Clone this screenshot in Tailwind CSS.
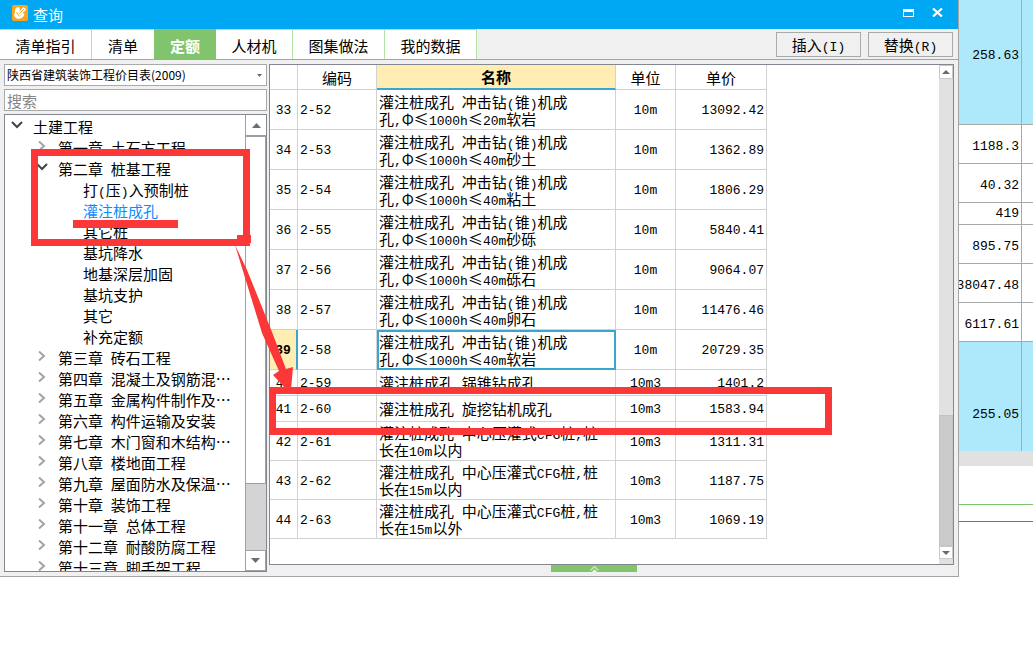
<!DOCTYPE html>
<html lang="zh-CN">
<head>
<meta charset="utf-8">
<meta name="viewport" content="width=device-width, initial-scale=1">
<title>查询</title>
<script src="https://cdn.jsdelivr.net/npm/@tailwindcss/browser@4"></script>
</head>
<body class="relative min-h-screen bg-white overflow-x-hidden font-['Noto_Sans_CJK_SC',sans-serif] text-[15px] leading-[17px] text-black">
<div class="flex items-start">

  <section class="relative flex-1 min-w-0 bg-[#f0f0f0] border-r border-b border-[#a5a5a5]" aria-label="查询">
    <header class="flex items-center h-[29px] bg-[#00a8f3] text-white pl-3 pr-3.5">
      <svg class="w-4 h-4 mb-1" viewBox="0 0 16 16" aria-hidden="true">
        <rect width="16" height="16" rx="2" fill="#fba61c"/>
        <path d="M7.500 2.500C4 1.500 2.500 4 3 6.500c.3 1.500-.8 2-.8 3.500 0 3 3 4.500 6 3.500 2.500-.8 3.500-2 4.300-4.500L10.500 8 8 11z" fill="#fff"/>
        <path d="M5.500 8.500l6-6.500 2.800 2.500L7.500 11z" fill="#fff"/>
        <path d="M4.500 7l3 4.500M7.500 8.500l4.500-4.500" fill="none" stroke="#fba61c"/>
      </svg>
      <h1 class="ml-[5px]">查询</h1>
      <button class="ml-auto mr-[18px] mb-1" aria-label="最大化"><svg class="w-[11px] h-2" viewBox="0 0 11 8"><path d="M0 0h11v8H0zM1 3v4h9V3z" fill="#fff" fill-rule="evenodd"/></svg></button>
      <button class="mr-[1px] mb-1" aria-label="关闭"><svg class="w-[11px] h-[9px]" viewBox="0 0 11 9"><path d="M1 .5l9 8M10 .5l-9 8" stroke="#fff" stroke-width="2.200"/></svg></button>
    </header>

    <nav class="flex h-[31px] border-b border-[#7fc36a]">
      <button class="w-[92px] bg-white border-t border-r border-[#b4e4a4] pt-[2px]">清单指引</button>
      <button class="w-[62px] bg-white border-t border-[#b4e4a4] pt-[2px]">清单</button>
      <button class="w-[62px] bg-[#81c46c] text-white font-bold pt-[2px]">定额</button>
      <button class="w-[77px] bg-white border-t border-r border-[#b4e4a4] pt-[2px]">人材机</button>
      <button class="w-[92px] bg-white border-t border-r border-[#b4e4a4] pt-[2px]">图集做法</button>
      <button class="w-[92px] bg-white border-t border-r border-[#b4e4a4] pt-[2px]">我的数据</button>
      <div class="flex gap-[7px] ml-auto mr-[5px] pt-[3px]">
        <button class="w-[85px] h-[25px] border border-[#a9a9a9]">插入<span class="font-['Liberation_Mono',monospace] text-[13px] leading-[0px]">(I)</span></button>
        <button class="w-[85px] h-[25px] border border-[#a9a9a9]">替换<span class="font-['Liberation_Mono',monospace] text-[13px] leading-[0px]">(R)</span></button>
      </div>
    </nav>

    <div class="flex items-start gap-[2px] pl-1 pr-1 pt-1 pb-1">
      <div class="w-[263px] shrink-0 flex flex-col gap-[3px]">
        <div class="relative">
          <select aria-label="价目表" class="block w-full h-[22px] appearance-none bg-white border border-[#a9a9a9] pl-[2px] text-xs leading-[18px]"><option>陕西省建筑装饰工程价目表(2009)</option></select>
          <svg class="absolute right-[5px] top-[10px] w-[5px] h-[3px] pointer-events-none" viewBox="0 0 5 3"><path d="M0 0h5L2.500 3z" fill="#6b6b80"/></svg>
        </div>
        <input type="text" aria-label="搜索" placeholder="搜索" class="h-[22px] w-full bg-white border border-[#a9a9a9] pl-[2px] placeholder:text-[#858585]">
        <div class="flex h-[458px] bg-white border border-[#83878f]">
          <ul id="tree" class="flex-1 min-w-0 overflow-hidden pt-[1px]"></ul>
          <div class="w-[21px] flex flex-col bg-[#d4d4d4] border-l border-[#a0a0a0]">
            <button class="h-[21px] bg-white border-b border-[#a0a0a0] flex items-center justify-center" aria-label="向上"><svg class="w-[9px] h-[5px]" viewBox="0 0 9 5"><path d="M0 5h9L4.500 0z" fill="#6b6b80"/></svg></button>
            <div class="h-[348px] bg-white border-y border-r border-[#a0a0a0]"></div>
            <button class="mt-auto h-[21px] bg-white border border-l-0 border-[#a0a0a0] flex items-center justify-center" aria-label="向下"><svg class="w-[9px] h-[5px]" viewBox="0 0 9 5"><path d="M0 0h9L4.500 5z" fill="#6b6b80"/></svg></button>
          </div>
        </div>
      </div>

      <div class="flex-1 min-w-0">
        <div class="flex justify-between h-[501px] bg-white border border-[#83878f]">
          <table class="w-[497px] h-fit table-fixed border-separate border-spacing-0">
            <colgroup><col class="w-[28px]"><col class="w-[79px]"><col class="w-[239px]"><col class="w-[60px]"><col class="w-[91px]"></colgroup>
            <thead>
              <tr class="h-[25px]">
                <th class="border-r border-b border-[#d2d2d2]"></th>
                <th class="border-r border-b border-[#d2d2d2] font-normal">编码</th>
                <th class="border-r border-r-[#d2d2d2] border-b-2 border-b-[#3aa6d0] bg-[#ffedb4] font-bold">名称</th>
                <th class="border-r border-b border-[#d2d2d2] font-normal">单位</th>
                <th class="border-r border-b border-[#d2d2d2] font-normal">单价</th>
              </tr>
            </thead>
            <tbody id="rows"></tbody>
          </table>
          <div class="w-[14px] flex flex-col bg-[#e1e1e1] pb-[5px]">
            <button class="h-[14px] bg-white border border-[#cacaca] flex items-center justify-center" aria-label="向上"><svg class="w-2 h-1" viewBox="0 0 8 4"><path d="M0 4h8L4 0z" fill="#6b6b75"/></svg></button>
            <div class="mt-auto h-[131px] bg-[#cbcbcb] border border-[#c2c2c2]"></div>
            <button class="h-[13px] bg-white border border-[#cacaca] flex items-center justify-center" aria-label="向下"><svg class="w-2 h-1" viewBox="0 0 8 4"><path d="M0 0h8L4 4z" fill="#6b6b75"/></svg></button>
          </div>
        </div>
        <button class="flex items-end justify-center w-[86px] h-[7px] ml-[282px] bg-[#81c46c]" aria-label="展开"><svg class="w-[9px] h-[6px]" viewBox="0 0 9 6"><path d="M.5 4.500l4-4 4 4" fill="none" stroke="#c9e8bf" stroke-width="1.400"/><path d="M2 6l2.500-2.500L7 6z" fill="#fff"/></svg></button>
      </div>
    </div>
  </section>

  <aside class="w-[74px] shrink-0 overflow-hidden font-['Liberation_Mono',monospace] text-[13px]">
    <div id="sheet"></div>
    <div class="h-[15px] bg-[#e1e1e1]"></div>
    <div class="h-[39px] border-b border-[#81c46c]"></div>
    <div class="h-[17px] border-b border-[#77737a]"></div>
  </aside>
</div>

<!-- red callouts drawn over the window -->
<div class="absolute left-[31px] top-[149px] w-[219px] h-[97px] border-[7px] border-[#fb3737] pointer-events-none"></div>
<div class="absolute left-[73px] top-[220px] w-[105px] h-2 bg-[#fb3737]"></div>
<div class="absolute left-[237px] top-[235px] w-[14px] h-2 bg-[#fb3737]"></div>
<div class="absolute left-[269px] top-[387px] w-[563px] h-12 border-[7px] border-[#fb3737] pointer-events-none"></div>
<svg class="absolute left-[225px] top-[230px] w-[85px] h-[170px] pointer-events-none" viewBox="0 0 85 170"><path d="M10 15L22 40L47 102L61 139L68 137L66 160L60 158L48 145L54 141L37 103Z" fill="#fb3737"/></svg>

<script>
const latin = s => s.replace(/[ -~]+/g, m => `<span class="font-['Liberation_Mono',monospace] text-[13px] leading-[0px] whitespace-pre-wrap">${m}</span>`);

// [depth, label, state]
const tree = [
  [0,'土建工程','open'],[1,'第一章 土石方工程',''],[1,'第二章 桩基工程','open'],
  [2,'打(压)入预制桩'],[2,'灌注桩成孔','active'],[2,'其它桩'],[2,'基坑降水'],[2,'地基深层加固'],[2,'基坑支护'],[2,'其它'],[2,'补充定额'],
  [1,'第三章 砖石工程',''],[1,'第四章 混凝土及钢筋混⋯',''],[1,'第五章 金属构件制作及⋯',''],[1,'第六章 构件运输及安装',''],
  [1,'第七章 木门窗和木结构⋯',''],[1,'第八章 楼地面工程',''],[1,'第九章 屋面防水及保温⋯',''],[1,'第十章 装饰工程',''],
  [1,'第十一章 总体工程',''],[1,'第十二章 耐酸防腐工程',''],[1,'第十三章 脚手架工程','']
];
const pads = ['pl-[6px]','pl-[31px]','pl-[78px]'];
const openIcon = '<svg class="w-3 h-2 mr-[10px] mb-1 shrink-0" viewBox="0 0 12 8"><path d="M1 1l5 5 5-5" fill="none" stroke="#444" stroke-width="2"/></svg>';
const shutIcon = '<svg class="w-3 h-[10px] mr-[10px] mb-[3px] shrink-0" viewBox="0 0 12 10"><path d="M3 .5L8 5 3 9.500" fill="none" stroke="#a3a3a3" stroke-width="2"/></svg>';
document.getElementById('tree').innerHTML = tree.map(([d, t, s]) =>
  `<li class="flex items-center h-[21px] whitespace-nowrap ${pads[d]} ${s === 'active' ? 'text-[#0a8cff]' : ''}">${d === 2 ? '' : s === 'open' ? openIcon : shutIcon}<span>${latin(t)}</span></li>`).join('');

const drill = '灌注桩成孔 冲击钻(锥)机成<br>孔,Φ≤1000h≤';
const cfg = '灌注桩成孔 中心压灌式CFG桩,桩<br>长在';
const rows = [
  [33,'2-52',[drill,'20m软岩'],'10m','13092.42'],[34,'2-53',[drill,'40m砂土'],'10m','1362.89'],
  [35,'2-54',[drill,'40m粘土'],'10m','1806.29'],[36,'2-55',[drill,'40m砂砾'],'10m','5840.41'],
  [37,'2-56',[drill,'40m砾石'],'10m','9064.07'],[38,'2-57',[drill,'40m卵石'],'10m','11476.46'],
  [39,'2-58',[drill,'40m软岩'],'10m','20729.35'],[40,'2-59',['灌注桩成孔 锅锥钻成孔'],'10m3','1401.2'],
  [41,'2-60',['灌注桩成孔 旋挖钻机成孔'],'10m3','1583.94'],[42,'2-61',[cfg,'10m以内'],'10m3','1311.31'],
  [43,'2-62',[cfg,'15m以内'],'10m3','1187.75'],[44,'2-63',[cfg,'15m以外'],'10m3','1069.19']
];
document.getElementById('rows').innerHTML = rows.map(([n, code, name, unit, price]) => {
  const h = n < 40 ? 'h-[40px]' : n < 42 ? 'h-[26px]' : 'h-[39px]';
  const cell = "border-r border-b border-[#d2d2d2] pt-[2px] font-['Liberation_Mono',monospace] text-[13px]";
  const sel = n === 39;
  const text = name.join('').split('<br>').map(latin).join('<br>');
  return `<tr class="${h}">
    <td class="border-b border-b-[#d2d2d2] pt-[2px] font-['Liberation_Mono',monospace] text-[13px] text-center ${sel ? 'border-r-2 border-r-[#3aa6d0] bg-[#ffedb4] font-bold' : 'border-r border-r-[#d2d2d2]'}">${n}</td>
    <td class="${cell} pl-[2px]">${code}</td>
    <td class="whitespace-nowrap ${sel ? 'border-2 border-[#3aa6d0]' : 'border-r border-b border-[#d2d2d2] pl-[2px]'}">${text}</td>
    <td class="${cell} text-center">${unit}</td>
    <td class="${cell} text-right pr-[2px]">${price}</td></tr>`;
}).join('');

const sheet = [
  ['258.63','h-[125px] bg-[#aee8fb]','pb-[14px]'],['1188.3','h-[39px]','pt-1'],['40.32','h-[39px]','pt-1'],['419','h-[22px]',''],
  ['895.75','h-[39px]','pt-1'],['38047.48','h-[39px]','pt-1'],['6117.61','h-[39px]','pt-1'],['255.05','h-[109px] bg-[#aee8fb]','pt-9']
];
document.getElementById('sheet').innerHTML = sheet.map(([v, c, p], i) =>
  `<div class="flex ${c} ${i < 7 ? 'border-b border-[#a9a9a9]' : ''} pr-[11px]"><div class="flex flex-1 min-w-0 items-center justify-end border-r border-[#a9a9a9] pr-[2px] ${p}">${v}</div></div>`).join('');
</script>
</body>
</html>
